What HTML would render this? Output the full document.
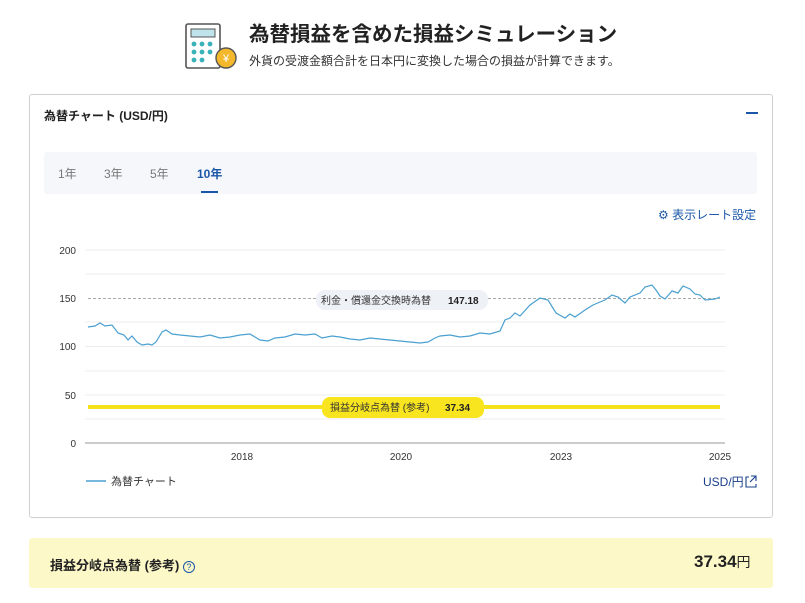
<!DOCTYPE html>
<html><head><meta charset="utf-8"><style>
*{margin:0;padding:0;box-sizing:border-box}
body{width:805px;height:603px;background:#fff;font-family:"Liberation Sans","Noto Sans CJK JP",sans-serif;color:#222;position:relative;overflow:hidden}
.abs{position:absolute}
</style></head><body>
<svg class="abs" style="left:184px;top:22px" width="56" height="50" viewBox="0 0 56 50">
<rect x="2" y="2" width="34" height="44" rx="2" fill="#fff" stroke="#555" stroke-width="1.6"/>
<rect x="7" y="7" width="24" height="8" fill="#bfe3ea" stroke="#555" stroke-width="1"/>
<g fill="#3ab0b8"><circle cx="10" cy="22" r="2.4"/><circle cx="18" cy="22" r="2.4"/><circle cx="26" cy="22" r="2.4"/><circle cx="10" cy="30" r="2.4"/><circle cx="18" cy="30" r="2.4"/><circle cx="26" cy="30" r="2.4"/><circle cx="10" cy="38" r="2.4"/><circle cx="18" cy="38" r="2.4"/></g>
<circle cx="42" cy="36" r="10" fill="#f3b82c" stroke="#555" stroke-width="1.4"/>
<text x="42" y="40" font-size="11" text-anchor="middle" fill="#fff" font-family="Liberation Sans,sans-serif">¥</text>
</svg>
<div class="abs" style="left:249px;top:17px;font-size:20.5px;font-weight:bold;color:#222">為替損益を含めた損益シミュレーション</div>
<div class="abs" style="left:249px;top:52px;font-size:12px;color:#333">外貨の受渡金額合計を日本円に変換した場合の損益が計算できます。</div>

<div class="abs" style="left:29px;top:94px;width:744px;height:424px;border:1px solid #cfcfcf;border-radius:3px"></div>
<div class="abs" style="left:44px;top:107px;font-size:12px;font-weight:bold">為替チャート (USD/円)</div>
<div class="abs" style="left:746px;top:112px;width:12px;height:2px;background:#1a57a8"></div>
<div class="abs" style="left:44px;top:152px;width:713px;height:42px;background:#f5f7fa;border-radius:3px"></div>
<div class="abs" style="left:58px;top:165px;font-size:12px;color:#777">1年</div>
<div class="abs" style="left:104px;top:165px;font-size:12px;color:#777">3年</div>
<div class="abs" style="left:150px;top:165px;font-size:12px;color:#777">5年</div>
<div class="abs" style="left:197px;top:165px;font-size:12px;color:#1a57a8;font-weight:bold">10年</div>
<div class="abs" style="left:201px;top:191px;width:17px;height:2px;background:#1a57a8"></div>
<div class="abs" style="left:658px;top:206px;font-size:12px;color:#1a57a8">⚙ 表示レート設定</div>

<svg class="abs" style="left:0;top:0" width="805" height="603">
<g stroke="#ececec" stroke-width="1"><line x1="85" y1="250" x2="725" y2="250"/><line x1="85" y1="346.5" x2="725" y2="346.5"/><line x1="85" y1="395" x2="725" y2="395"/><line x1="85" y1="322" x2="725" y2="322"/><line x1="85" y1="274" x2="725" y2="274"/><line x1="85" y1="371" x2="725" y2="371"/><line x1="85" y1="419" x2="725" y2="419"/></g>
<line x1="85" y1="443" x2="725" y2="443" stroke="#999"/>
<line x1="88" y1="298.5" x2="720" y2="298.5" stroke="#aaa" stroke-dasharray="3,2"/>
<line x1="88" y1="407" x2="720" y2="407" stroke="#f5e21a" stroke-width="4"/>
<g font-size="10" fill="#333" text-anchor="end"><text x="76" y="254">200</text><text x="76" y="302">150</text><text x="76" y="350">100</text><text x="76" y="399">50</text><text x="76" y="447">0</text></g>
<g font-size="10" fill="#333" text-anchor="middle"><text x="242" y="460">2018</text><text x="401" y="460">2020</text><text x="561" y="460">2023</text><text x="720" y="460">2025</text></g>
<polyline fill="none" stroke="#4aa0d0" stroke-width="1.2" points="88,327 95,326 100,323 105,326 112,325 118,333 124,335 128,340 132,336 137,342 142,345 148,344 152,345 156,342 162,332 166,330 172,334 180,335 190,336 200,337 210,335 220,338 230,337 240,335 250,334 260,340 268,341 275,338 285,337 295,334 305,335 315,334 322,338 332,336 340,337 350,339 360,340 370,338 380,339 390,340 400,341 410,342 420,343 428,342 435,338 440,336 450,335 460,337 470,336 480,333 490,334 500,331 505,320 510,318 515,313 520,316 530,305 540,298 548,300 556,313 565,318 570,314 575,317 585,310 593,305 600,302 605,300 612,295 618,297 625,303 630,297 640,293 645,287 652,285 656,290 660,296 665,299 672,291 678,293 683,286 690,289 695,294 700,295 705,300 715,299 720,297"/>
<rect x="316" y="290" width="172" height="20" rx="9" fill="#eef1f6"/>
<text x="321" y="304" font-size="10" fill="#333">利金・償還金交換時為替</text>
<text x="448" y="304" font-size="10" fill="#222" font-weight="bold">147.18</text>
<rect x="322" y="397" width="162" height="21" rx="8" fill="#f8e51f"/>
<text x="330" y="411" font-size="10" fill="#333">損益分岐点為替 (参考)</text>
<text x="445" y="411" font-size="10" fill="#222" font-weight="bold">37.34</text>
<line x1="86" y1="481" x2="106" y2="481" stroke="#4aa0d0" stroke-width="1.5"/>
<text x="111" y="485" font-size="11" fill="#333">為替チャート</text>
<text x="703" y="486" font-size="12" fill="#1a3f8a">USD/円</text>
<path d="M749 477h-3v10h10v-3 M751 476h5v5 M756 476l-6 6" fill="none" stroke="#1a3f8a" stroke-width="1.1"/>
</svg>

<div class="abs" style="left:29px;top:538px;width:744px;height:50px;background:#fdf8c8;border-radius:3px"></div>
<div class="abs" style="left:50px;top:555px;font-size:13px;font-weight:bold">損益分岐点為替 (参考) <span style="color:#1a57a8;font-weight:normal;display:inline-block;width:12px;height:12px;border:1px solid #1a57a8;border-radius:50%;font-size:9px;text-align:center;line-height:11px">?</span></div>
<div class="abs" style="left:694px;top:552px;font-size:17px;font-weight:bold">37.34<span style="font-weight:normal;font-size:14px">円</span></div>
</body></html>
